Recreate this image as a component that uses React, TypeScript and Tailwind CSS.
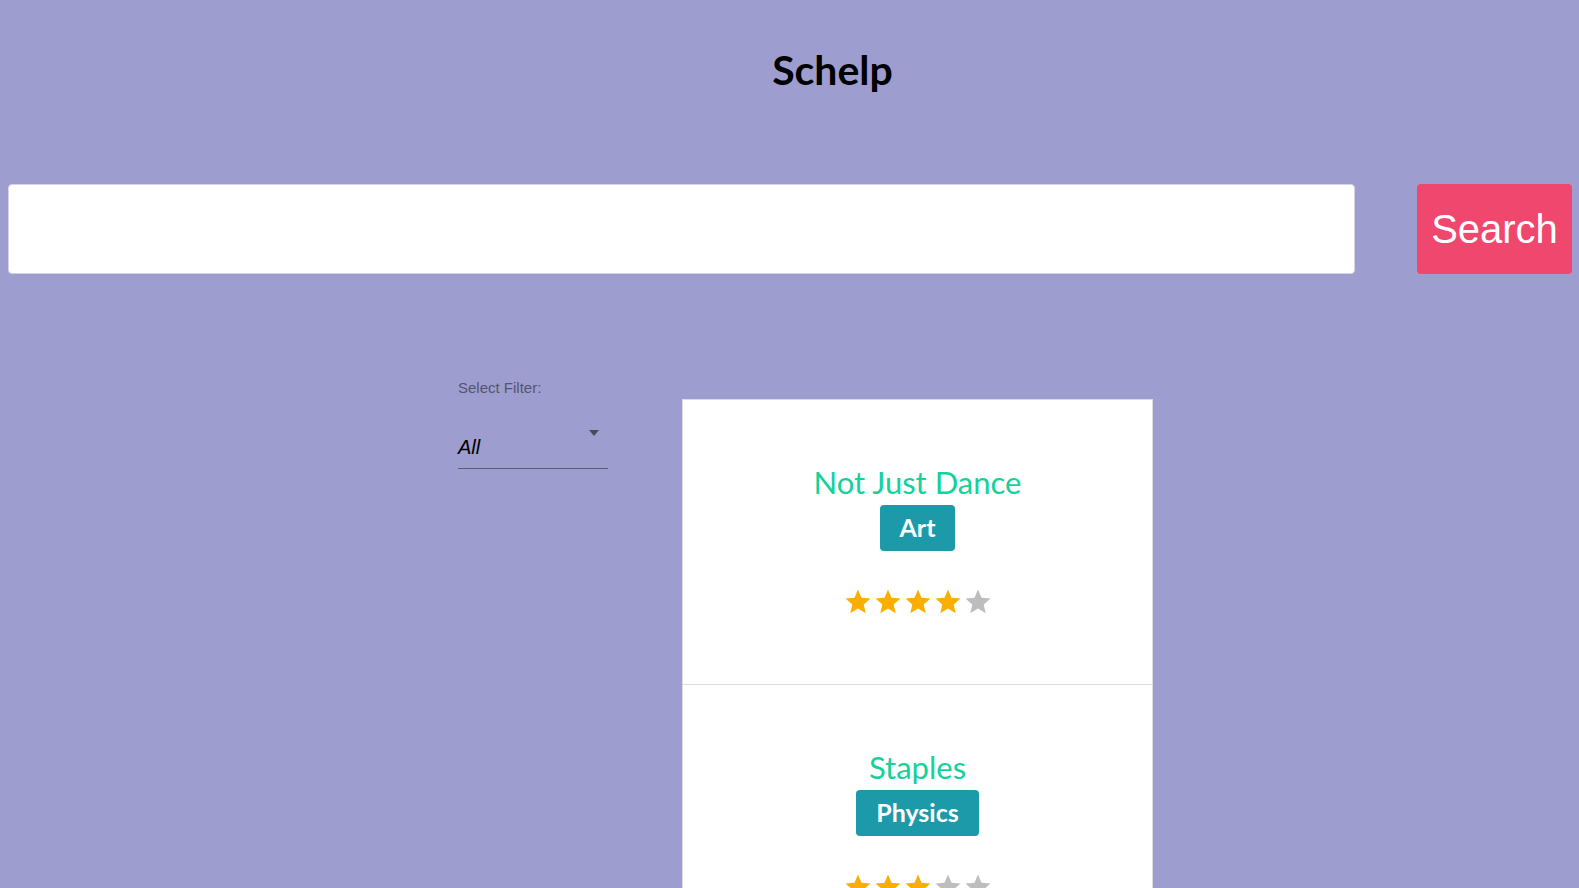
import { useState } from "react";

type Place = { name: string; subject: string; rating: number };

const places: Place[] = [
  { name: "Not Just Dance", subject: "Art", rating: 4 },
  { name: "Staples", subject: "Physics", rating: 3 },
  { name: "Kumon", subject: "Math", rating: 5 },
];

function Star({ filled }: { filled: boolean }) {
  return (
    <svg
      viewBox="0 0 24 24"
      className={filled ? "h-[30px] w-[30px] fill-[#faaf00]" : "h-[30px] w-[30px] fill-[#bdbdbd]"}
    >
      <path d="M12 17.27 18.18 21l-1.64-7.03L22 9.24l-7.19-.61L12 2 9.19 8.63 2 9.24l5.46 4.73L5.82 21z" />
    </svg>
  );
}

function PlaceCard({ place }: { place: Place }) {
  return (
    <div className="flex h-[285px] flex-col items-center bg-white pt-[64px]">
      <h2 className="text-[31px] leading-[36px] text-[#15d19a]">{place.name}</h2>
      <span className="mt-[5px] flex h-[46px] items-center rounded-[4px] bg-[#1d9aa9] px-[20px] text-[25px] font-bold text-white">
        {place.subject}
      </span>
      <div className="mt-[36px] flex">
        {[1, 2, 3, 4, 5].map((i) => (
          <Star key={i} filled={i <= place.rating} />
        ))}
      </div>
    </div>
  );
}

export default function App() {
  const [query, setQuery] = useState("");

  return (
    <div className="min-h-screen bg-[#9d9ecf] font-['Lato',sans-serif]">
      <h1 className="pt-[46px] pl-[86px] text-center text-[41px] font-bold leading-[48px] text-black">
        Schelp
      </h1>

      <div className="mt-[90px] flex pl-[8px] pr-[7px]">
        <input
          value={query}
          onChange={(e) => setQuery(e.target.value)}
          className="h-[90px] flex-1 rounded-[4px] border border-[#d4d4e4] bg-white px-4 text-2xl outline-none"
        />
        <button className="ml-[62px] h-[90px] w-[155px] rounded-[4px] bg-[#f0476f] font-['Liberation_Sans',Arial,sans-serif] text-[40px] text-white">
          Search
        </button>
      </div>

      <div className="mt-[105px] flex items-start pl-[458px]">
        <div className="w-[150px] font-['Liberation_Sans',Arial,sans-serif]">
          <p className="text-[15px] leading-[17px] text-[#55556e]">Select Filter:</p>
          <div className="relative mt-[24px] border-b border-[#5b5c72] pt-[16px] pb-[9px]">
            <span className="block text-[20px] leading-[23px] italic text-black">All</span>
            <span className="absolute right-[9px] top-[10px] h-0 w-0 border-x-[5.5px] border-t-[6px] border-x-transparent border-t-[#4a4a5e]" />
          </div>
        </div>

        <div className="mt-[20px] ml-[74px] w-[471px] divide-y divide-[#dddddd] border border-[#dddddd]">
          {places.map((p) => (
            <PlaceCard key={p.name} place={p} />
          ))}
        </div>
      </div>
    </div>
  );
}
